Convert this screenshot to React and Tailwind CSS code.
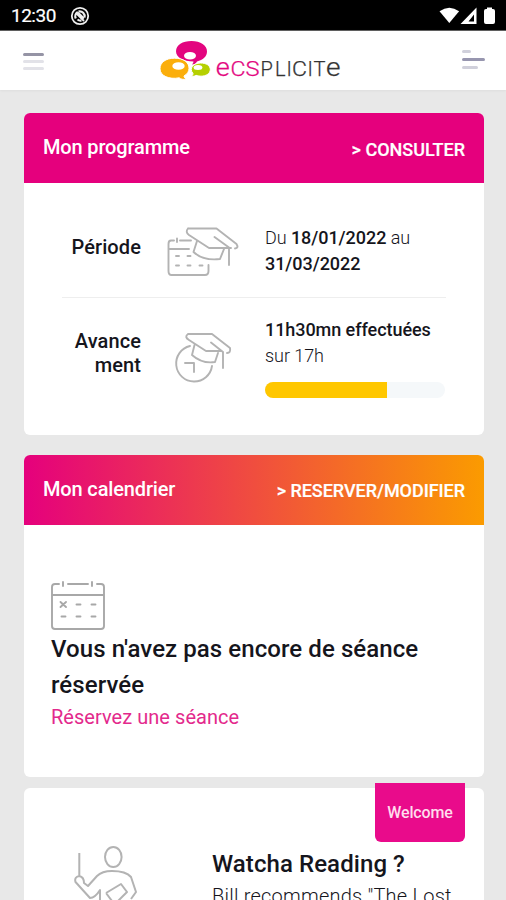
import React from "react";

function StatusBar() {
  return (
    <div className="flex h-[31px] shrink-0 items-center justify-between border-b border-[#555] bg-black pl-[11px] pr-[8px] pt-[2px] text-white">
      <div className="flex items-center gap-[14px]">
        <span className="text-[19px] leading-[22px] tracking-[-0.5px] [-webkit-text-stroke:0.2px_white]">12:30</span>
        <svg width="20" height="20" viewBox="0 0 20 20" fill="none" stroke="#eee">
          <circle cx="10" cy="10" r="8.2" strokeWidth="1.8" />
          <path d="M5.800 12.500a5 5 0 0 1 2-6.500M8.500 5.500a5 5 0 0 1 6 6M11.500 14.500a5 5 0 0 1-4-1" strokeWidth="2.200" />
          <path d="M6 7l8 8M8 6.500l6 6" strokeWidth="1.8" />
        </svg>
      </div>
      <svg width="60" height="20" viewBox="0 0 60 20" fill="white">
        <path d="M1.500 5.200Q11.300-1.800 21.100 5.200L11.300 17Z" />
        <path fillRule="evenodd" d="M38.500 1.500V18H22.500ZM36 8.500L30.500 15.500H36Z" />
        <path d="M49 1.500h5v1.500h1q2 0 2 2V16q0 2-2 2h-7q-2 0-2-2V5q0-2 2-2H49Z" />
      </svg>
    </div>
  );
}

function Logo() {
  return (
    <svg width="184" height="44" viewBox="158 38 184 44">
      <path fill="#e3057f" d="M191.500 41c9 0 15.500 4.500 15.500 10.500 0 5-4 8.500-10 10-1 2-2.500 3-5 3 1-1 1.500-2 1.500-3-10 0-17.500-4-17.500-10.200S182.500 41 191.500 41Z" />
      <ellipse cx="190" cy="55.800" rx="6" ry="3.800" fill="#fff" />
      <path fill="#fbae0b" stroke="#fff" strokeWidth="1" d="M174.500 58.200c9 0 14.500 4 14.500 10 0 3.500-1.800 6-5 7.800.2 1.500 1 2.300 2.200 3-3 .8-5.500.2-7-1.200-10 2-19.200-2-19.200-9 0-6.200 5.500-10.600 14.500-10.600Z" />
      <ellipse cx="178.500" cy="66" rx="6.200" ry="3.800" fill="#fff" />
      <path fill="#b5d000" stroke="#fff" strokeWidth="1" d="M200.500 63c6 0 9.800 2.700 9.800 6.500 0 4-4.200 6.700-9.300 6.700-2 0-3.500-.3-5-.9-1 .8-2.500 1.200-4.500.9 1-.8 1.600-1.700 1.500-2.800-4.500-5 .5-10.400 7.500-10.400Z" />
      <ellipse cx="198" cy="67.500" rx="4.400" ry="2.500" fill="#fff" />
      <g fontFamily="Roboto, sans-serif" fontWeight="300" strokeWidth="0.25">
        <g fill="#e3057f" stroke="#e3057f" fontSize="20">
          <text x="215.700" y="76" fontSize="26" textLength="14" lengthAdjust="spacingAndGlyphs">e</text>
          <text x="230.500" y="76" textLength="15" lengthAdjust="spacingAndGlyphs">C</text>
          <text x="245.500" y="76" textLength="14" lengthAdjust="spacingAndGlyphs">S</text>
        </g>
        <g fill="#333" stroke="#333" fontSize="20">
          <text x="260.500" y="76">P</text>
          <text x="275" y="76">L</text>
          <text x="286.500" y="76">I</text>
          <text x="292" y="76" textLength="15" lengthAdjust="spacingAndGlyphs">C</text>
          <text x="307.500" y="76">I</text>
          <text x="313.500" y="76">T</text>
          <text x="326" y="76" fontSize="26" textLength="14.500" lengthAdjust="spacingAndGlyphs">e</text>
        </g>
      </g>
    </svg>
  );
}

function Header() {
  return (
    <header className="flex h-[59px] shrink-0 justify-between bg-white pl-[23px] pr-[21px] shadow-[0_1px_2px_#ddd]">
      <div className="mt-[22px] flex w-[21px] flex-col gap-[4px]">
        <i className="h-[3px] rounded bg-[#9594a5]" />
        <i className="h-[3px] rounded bg-[#e2e2e8]" />
        <i className="h-[3px] rounded bg-[#e2e2e8]" />
      </div>
      <div className="ml-[-7px] mt-[7px]"><Logo /></div>
      <div className="mt-[19px] flex w-[23px] flex-col gap-[5px]">
        <i className="h-[3px] w-[9px] rounded bg-[#d0d0db]" />
        <i className="h-[3px] rounded bg-[#9796af]" />
        <i className="h-[3px] w-[16px] rounded bg-[#d0d0db]" />
      </div>
    </header>
  );
}

function ProgramIcon() {
  return (
    <svg width="76" height="56" viewBox="165 224 76 56" fill="none" stroke="#b3b3b3" strokeWidth="1.900" strokeLinejoin="round" strokeLinecap="round">
      <path d="M174 240.500H171Q168.500 240.500 168.500 244V271Q168.500 275 171.500 275H205Q208.500 275 208.500 271V265M180 240.500H191M168.500 249H189M177 238.500V242M176 256h3M187.500 256h3M176 265.500h3M187.500 265.500h3M199.500 265.500h3" />
      <path d="M188 228.500H216.500L236.500 244Q239 248 235 248.500M188 228.500Q185 232 189 235L209 248H231" />
      <path d="M197 241L193.500 252Q203 261 220 259L224 249M214.500 237L229 247.500V265" />
    </svg>
  );
}

function ProgressIcon() {
  return (
    <svg width="62" height="56" viewBox="173 330 62 56" fill="none" stroke="#b3b3b3" strokeWidth="1.900" strokeLinejoin="round" strokeLinecap="round">
      <path d="M190 346A18 18 0 1 0 212 366M185 363H194V372" />
      <path d="M188 334H212L230 348Q231 353 227 353M188 334Q184 337 189 340L206 351H221M194.500 345L192 355Q202 364 215 362L218 353M211 342.500L223 352V368" />
    </svg>
  );
}

function CalendarIcon() {
  return (
    <svg width="56" height="54" viewBox="50 578 56 54" fill="none" stroke="#a8a8a8" strokeWidth="1.900" strokeLinecap="round">
      <path d="M59 584H55Q52 584 52 587V626Q52 629 55 629H101Q104 629 104 626V587Q104 584 101 584H97M68 584H88M52 595H104M63 582V586M92 582V586M60.500 602l5.500 5M66 602l-5.500 5M76.500 604.500h4M91.500 604.500h4M61.500 616.500h4M76.500 616.500h4M91.500 616.500h4" />
    </svg>
  );
}

function TeacherIcon() {
  return (
    <svg width="66" height="56" viewBox="73 844 66 56" fill="none" stroke="#b3b3b3" strokeWidth="2" strokeLinejoin="round">
      <ellipse cx="113.300" cy="857" rx="8.300" ry="10" />
      <path d="M79.300 853V876Q74 877 75.500 882L90 898Q95 898 100 890V901M79.300 876Q84 877 84 883L88 886L97 876Q102 871 112 871Q126 871 131 877L136 892L131 899M106 893L121 884L127 892L118 901M106 893L112 901" />
    </svg>
  );
}

export default function App() {
  return (
    <div className="flex h-[900px] w-[506px] flex-col overflow-hidden bg-[#e8e8e8] font-['Roboto',sans-serif] text-[#15151c]">
      <StatusBar />
      <Header />
      <main className="flex flex-col pl-[24px] pr-[22px] pt-[23px]">
        <section className="h-[322px] overflow-hidden rounded-[6px] bg-white">
          <div className="flex h-[70px] items-center justify-between bg-[#e5007d] px-[19px] text-white">
            <h2 className="pb-[2px] text-[20px] font-medium tracking-[-0.15px]">Mon programme</h2>
            <a className="pt-[3px] text-[18px] font-medium [-webkit-text-stroke:0.2px_white]">&gt; CONSULTER</a>
          </div>
          <div className="mx-[38px] flex h-[115px] border-b border-[#eee]">
            <div className="w-[79px] pt-[52px] text-right text-[20px] font-medium leading-[24px] tracking-[0.1px]">Période</div>
            <div className="ml-[24px] mt-[41px] w-[76px]"><ProgramIcon /></div>
            <p className="ml-[24px] whitespace-nowrap pt-[42px] text-[18px] leading-[26px] tracking-[-0.05px]"><span className="font-light">Du </span><b className="font-medium">18/01/2022</b><span className="font-light"> au</span><br /><b className="font-medium">31/03/2022</b></p>
          </div>
          <div className="mx-[38px] flex">
            <div className="w-[79px] pt-[31px] text-right text-[20px] font-medium leading-[24px] tracking-[0.1px]">Avance<br />ment</div>
            <div className="ml-[32px] mt-[32px] w-[62px]"><ProgressIcon /></div>
            <div className="ml-[30px] w-[180px] pt-[19px]">
              <p className="whitespace-nowrap text-[18px] leading-[26px] tracking-[-0.06px]"><b className="font-medium">11h30mn effectuées</b><br /><span className="font-light">sur 17h</span></p>
              <div className="mt-[13px] h-[16px] overflow-hidden rounded-full bg-[#f5f8fa]"><div className="h-full w-[122px] bg-[#ffc700]" /></div>
            </div>
          </div>
        </section>

        <section className="mt-[20px] h-[322px] overflow-hidden rounded-[6px] bg-white">
          <div className="flex h-[70px] items-center justify-between bg-[linear-gradient(90deg,#e5007d,#fb9b00)] px-[19px] text-white">
            <h2 className="pb-[2px] text-[20px] font-medium tracking-[-0.15px]">Mon calendrier</h2>
            <a className="pt-[1px] text-[18px] font-medium tracking-[-0.05px] [-webkit-text-stroke:0.2px_white]">&gt; RESERVER/MODIFIER</a>
          </div>
          <div className="px-[27px] pt-[53px]">
            <div className="ml-[-1px] h-[53px]"><CalendarIcon /></div>
            <h3 className="whitespace-nowrap text-[24px] font-medium leading-[36px] tracking-[0.08px]">Vous n'avez pas encore de séance<br />réservée</h3>
            <a className="block text-[20px] leading-[28px] tracking-[0.04px] text-[#e3298c]">Réservez une séance</a>
          </div>
        </section>

        <section className="relative mt-[11px] h-[130px] rounded-t-[6px] bg-white">
          <span className="absolute right-[19px] top-[-5px] flex h-[59px] w-[90px] items-center justify-center rounded-b-[6px] bg-[#e90b8b] text-[16px] font-medium tracking-[-0.15px] text-[#ffdced]">Welcome</span>
          <div className="flex">
            <div className="ml-[49px] mt-[56px] w-[66px]"><TeacherIcon /></div>
            <div className="ml-[73px] whitespace-nowrap pt-[60px]">
              <h3 className="text-[24px] font-medium leading-[32px] tracking-[0.08px]">Watcha Reading ?</h3>
              <p className="text-[20px] font-light leading-[32px] tracking-[0.22px]">Bill recommends "The Lost</p>
            </div>
          </div>
        </section>
      </main>
    </div>
  );
}
